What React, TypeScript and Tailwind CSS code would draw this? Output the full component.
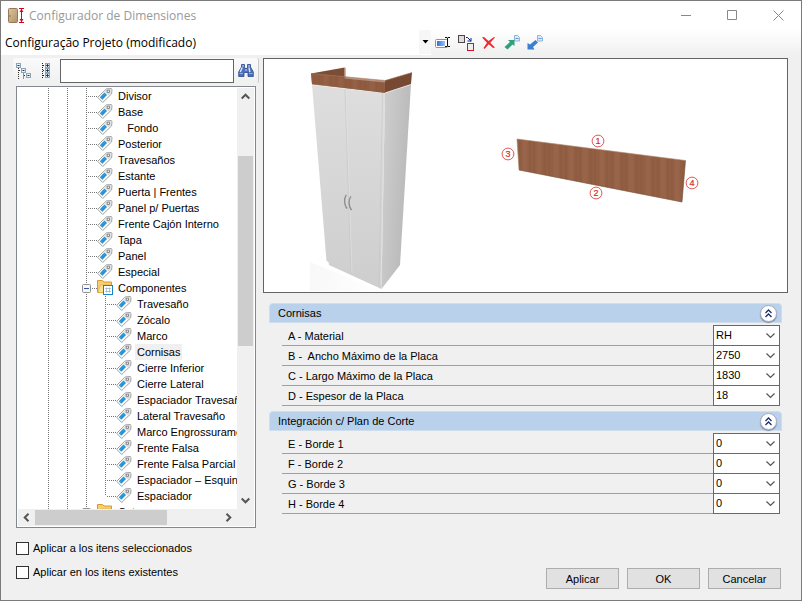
import React, { useState } from "react";

const tagged = [
  "Divisor",
  "Base",
  "\u00a0\u00a0\u00a0Fondo",
  "Posterior",
  "Travesaños",
  "Estante",
  "Puerta | Frentes",
  "Panel p/ Puertas",
  "Frente Cajón Interno",
  "Tapa",
  "Panel",
  "Especial",
];

const components = [
  "Travesaño",
  "Zócalo",
  "Marco",
  "Cornisas",
  "Cierre Inferior",
  "Cierre Lateral",
  "Espaciador Travesaño",
  "Lateral Travesaño",
  "Marco Engrossuramento",
  "Frente Falsa",
  "Frente Falsa Parcial",
  "Espaciador – Esquinero",
  "Espaciador",
];

const groups = [
  {
    title: "Cornisas",
    fields: [
      { id: "a", label: "A - Material", value: "RH" },
      { id: "b", label: "B -\u00a0 Ancho Máximo de la Placa", value: "2750" },
      { id: "c", label: "C - Largo Máximo de la Placa", value: "1830" },
      { id: "d", label: "D - Espesor de la Placa", value: "18" },
    ],
  },
  {
    title: "Integración c/ Plan de Corte",
    fields: [
      { id: "e", label: "E - Borde 1", value: "0" },
      { id: "f", label: "F - Borde 2", value: "0" },
      { id: "g", label: "G - Borde 3", value: "0" },
      { id: "h", label: "H - Borde 4", value: "0" },
    ],
  },
];

function DoorLogo() {
  return (
    <svg width="18" height="18" viewBox="0 0 18 18" aria-hidden="true">
      <defs>
        <linearGradient id="door" x1="0" x2="1" y1="0" y2="1">
          <stop offset="0" stopColor="#dfc39b" />
          <stop offset="1" stopColor="#b39168" />
        </linearGradient>
      </defs>
      <rect x="1.500" y="1.500" width="9" height="14" rx="1" fill="url(#door)" stroke="#94795a" />
      <path d="M3 8v2" stroke="#8a6e4c" />
      <path d="M12 1.500h5M12 15.500h5M14.500 2v13" stroke="#d9001b" />
      <path d="M14.500 2l2 3h-4zM14.500 15l2-3h-4z" fill="#d9001b" />
    </svg>
  );
}

function TagIcon() {
  return (
    <svg className="shrink-0" width="16" height="16" viewBox="0 0 16 16" aria-hidden="true">
      <path d="M.7 9.300L9.300.900l4.900-.4.800.8-.4 4.600L5.700 14.500z" fill="#fbfbfb" stroke="#969696" strokeWidth=".9" />
      <path d="M9.600 1.500l4.400-.4-.4 4.300-2 2-4-4z" fill="#dcdcdc" />
      <path d="M2.800 9.200l4.700-4.600 2.500 2.500-4.700 4.600z" fill="#2090d3" />
      <path d="M4.500 9.700l3.500-3.500" stroke="#74c3ee" strokeWidth=".8" strokeDasharray="1 1" />
      <rect x="10.200" y="2.200" width="2.200" height="2.200" fill="#fff" stroke="#808080" strokeWidth=".9" />
    </svg>
  );
}

function FolderIcon() {
  return (
    <svg className="shrink-0" width="16" height="16" viewBox="0 0 16 16" aria-hidden="true">
      <path d="M.5 12.500v-12h5l1.500 1.500h7.500v10.500z" fill="#f6cf72" stroke="#d99a2b" />
      <path d="M1 12.500l2.500-7.500h11v7.500z" fill="#fbe29b" stroke="#e0a63c" strokeWidth=".6" />
      <rect x="6.500" y="5.500" width="9" height="9" fill="#fff" stroke="#1784c7" />
      <path d="M8 8.500h6M8 11.500h6M9.500 7.500v5M12.500 7.500v5" stroke="#9db8cc" strokeWidth=".8" />
    </svg>
  );
}

function Minus() {
  return (
    <svg width="9" height="9" viewBox="0 0 9 9" aria-hidden="true">
      <rect x=".5" y=".5" width="8" height="8" rx="1" fill="#f7f7f7" stroke="#8f8f8f" />
      <path d="M2 4.500h5" stroke="#3354a8" />
    </svg>
  );
}

function CollapseAllIcon() {
  const box = "fill-[#eaf3fa] stroke-[#8aa5ba]";
  return (
    <svg width="16" height="16" viewBox="0 0 16 16" aria-hidden="true">
      <path d="M2.500 5v11M7.500 9.500v6.500M3 7.500h3M8 12.500h3" stroke="#333" strokeDasharray="1 1" />
      <rect className={box} x=".5" y=".5" width="4" height="4" />
      <rect className={box} x="5.500" y="5.500" width="4" height="4" />
      <rect className={box} x="10.500" y="10.500" width="4" height="4" />
      <path d="M1.500 2.500h2M6.500 7.500h2M11.500 12.500h2" stroke="#234" />
    </svg>
  );
}

function ExpandAllIcon() {
  const box = "fill-[#e4eef6] stroke-[#8aa5ba]";
  return (
    <svg width="10" height="16" viewBox="0 0 10 16" aria-hidden="true">
      <path d="M1.500 0v16M2 2.500h2M2 7.500h2M2 12.500h2" stroke="#222" strokeDasharray="1 1" />
      <rect className={box} x="4.500" y=".5" width="4" height="4" />
      <rect className={box} x="4.500" y="5.500" width="4" height="4" />
      <rect className={box} x="4.500" y="10.500" width="4" height="4" />
      <path d="M5 2.500h3M5 7.500h3M5 12.500h3M6.500 1v3M6.500 6v3M6.500 11v3" stroke="#123" strokeWidth=".8" />
    </svg>
  );
}

function Binoculars() {
  return (
    <svg width="16" height="16" viewBox="0 0 16 16" aria-hidden="true">
      <path
        d="M3.500 1.500h3V4l.5 1.500h2L9.500 4V1.500h3V4l2.800 5v4.500H10V9.500H6v4H.7V9l2.800-5z"
        fill="#4b70b8"
        stroke="#2a4a8f"
        strokeWidth=".8"
      />
      <path d="M4.200 4.500L2.300 9M11 4.500l.8 4.500" stroke="#dbe6fa" fill="none" strokeWidth="1.400" />
      <path d="M4 3h2M10 3h2M7 7h2" stroke="#c6d6f3" />
      <path d="M1.500 10.500h3.500M11 10.500h3.500" stroke="#8facdf" />
    </svg>
  );
}

function RenameIcon() {
  return (
    <svg width="16" height="16" viewBox="0 0 16 16" aria-hidden="true">
      <defs>
        <linearGradient id="fill">
          <stop offset="0" stopColor="#2f6fe0" />
          <stop offset="1" stopColor="#9cc2f7" />
        </linearGradient>
      </defs>
      <rect x=".5" y="4.500" width="12" height="8" rx="1" fill="#fff" stroke="#8a939e" />
      <rect x="2" y="6" width="8" height="5" fill="url(#fill)" />
      <path d="M10 2.500h2l.5.500.5-.500h2M10 11.500h2l.5-.500.5.500h2M12.500 3v8" stroke="#111" fill="none" />
    </svg>
  );
}

function DuplicateIcon() {
  return (
    <svg width="16" height="16" viewBox="0 0 16 16" aria-hidden="true">
      <rect x=".5" y=".5" width="6" height="7" fill="#ddd" stroke="#51434a" />
      <rect x="9.500" y="8.500" width="6" height="7" fill="#eee" stroke="#d9121b" />
      <path d="M8 2.500h1.500l3 3M13 3v3.500M9.500 6h3.500" stroke="#0b1f7a" fill="none" />
    </svg>
  );
}

function DeleteIcon() {
  return (
    <svg width="16" height="16" viewBox="0 0 16 16" aria-hidden="true">
      <path d="M1 2.500l2-.5 4.500 4 5.500-4 1 .5-4.700 5.200L14 12.500 12 13 7.800 9.300 3.500 14l-1-1L6 7.800z" fill="#ee2a2e" />
    </svg>
  );
}

function Sheet() {
  return (
    <g>
      <path d="M10.500.500h3l2 2v3.500h-5z" fill="#dceafb" stroke="#8fb3df" />
      <path d="M11.500 3.500h3" stroke="#6b98d0" />
    </g>
  );
}

function ExportIcon() {
  return (
    <svg width="16" height="16" viewBox="0 0 16 16" aria-hidden="true">
      <Sheet />
      <path d="M4 5h6.500v6L8.500 9.500l-5 5L.5 12 6 7z" fill="#2fa17c" />
    </svg>
  );
}

function ImportIcon() {
  return (
    <svg width="16" height="16" viewBox="0 0 16 16" aria-hidden="true">
      <Sheet />
      <path d="M8.500 5l2.500 2.500-5 4.500 1.500 2.500H.5V8l2.500 1.500z" fill="#3c7ed0" />
    </svg>
  );
}

type ScrollArrowProps = { d: string };

function ScrollArrow({ d }: ScrollArrowProps) {
  return (
    <svg width="9" height="9" viewBox="0 0 9 9" aria-hidden="true">
      <path d={d} fill="none" stroke="#555" strokeWidth="2" />
    </svg>
  );
}

function Guide() {
  return (
    <span className="h-4 w-[19px] shrink-0">
      <span className="block h-4 w-px bg-[repeating-linear-gradient(to_bottom,#777_0_1px,transparent_1px_2px)]" />
    </span>
  );
}

function Elbow({ half = false }: { half?: boolean }) {
  return (
    <span className="flex h-4 w-[11px] shrink-0 items-center">
      <span
        className={
          "w-px shrink-0 bg-[repeating-linear-gradient(to_bottom,#777_0_1px,transparent_1px_2px)] " +
          (half ? "h-2 self-start" : "h-4")
        }
      />
      <span className="h-px flex-1 bg-[repeating-linear-gradient(to_right,transparent_0_1px,#777_1px_2px)]" />
    </span>
  );
}

type NodeProps = {
  label: string;
  depth: number;
  folder?: boolean;
  last?: boolean;
  selected?: boolean;
  onSelect?: () => void;
};

function TreeNode({ label, depth, folder, last, selected, onSelect }: NodeProps) {
  return (
    <li
      role="treeitem"
      aria-selected={!!selected}
      onClick={onSelect}
      className="flex h-4 items-center whitespace-nowrap pl-[30px]"
    >
      {Array.from({ length: depth }, (_, i) => (
        <Guide key={i} />
      ))}
      <span className="relative">
        <Elbow half={last} />
        {folder && (
          <button aria-label="Contraer" className="absolute -left-1 top-1">
            <Minus />
          </button>
        )}
      </span>
      {folder ? <FolderIcon /> : <TagIcon />}
      <span className={"ml-[3px] h-4 px-[2px] leading-4 " + (selected ? "bg-[#f0f0f0]" : "")}>{label}</span>
    </li>
  );
}

function Callout({ x, y, n }: { x: number; y: number; n: number }) {
  return (
    <g>
      <circle cx={x} cy={y} r="5.900" fill="#fff" stroke="#df4545" strokeWidth=".9" />
      <text x={x} y={y + 3} textAnchor="middle" fontSize="9" fill="#d42a2a" stroke="#d42a2a" strokeWidth=".2">
        {n}
      </text>
    </g>
  );
}

function Preview() {
  return (
    <svg className="block h-[233px] w-[523px] max-w-full" viewBox="264 59 523 233" role="img" aria-label="Cornisas">
      <defs>
        <linearGradient id="front" x1="0" x2="0" y1="0" y2="1">
          <stop offset="0" stopColor="#dedede" />
          <stop offset="1" stopColor="#cecece" />
        </linearGradient>
        <linearGradient id="side" x1="0" x2="1" y1="0" y2=".4">
          <stop offset="0" stopColor="#d0d0d0" />
          <stop offset="1" stopColor="#b8b8b8" />
        </linearGradient>
        <linearGradient id="floor" x1="0" x2="1">
          <stop offset="0" stopColor="#f8f8f8" />
          <stop offset="1" stopColor="#fff" />
        </linearGradient>
        <pattern id="wood" width="46" height="60" patternUnits="userSpaceOnUse">
          <rect width="46" height="60" fill="#925f44" />
          <path d="M4 0v60M19 0v60M33 0v60" stroke="#98654a" strokeWidth="5" />
          <path d="M9 0v60M14 0v60M24 0v60M28 0v60M39 0v60M43 0v60" stroke="#8a583e" strokeWidth="1" />
        </pattern>
      </defs>
      <path d="M310 262l72 29h-72z" fill="url(#floor)" />
      <path d="M311 73.500l33.500-6v12l-20 2z" fill="#7b4d35" />
      <path d="M344.500 67.500l1 .5v10l-1 .5z" fill="#a37355" />
      <path d="M312 84.500l73 8-3.500 196.500-52.500-24-.5-3-2-1z" fill="url(#front)" />
      <path d="M385 92.500l26-8.500-11 181-18.500 24z" fill="url(#side)" />
      <path d="M384.500 93L381 285" stroke="#e0e0e0" strokeWidth="1" />
      <path d="M382.500 93L379 286" stroke="#c6c6c6" strokeWidth=".6" />
      <path d="M345 88.500l6 184" stroke="#c4c4c4" strokeWidth=".6" />
      <path d="M346 88.500l6 184" stroke="#e4e4e4" strokeWidth=".6" />
      <path d="M312 84.500l73 8 26-8.500" stroke="#efefef" strokeWidth="1.500" fill="none" />
      <path d="M311 73.500l33 5 41 4v10.500l-73-9z" fill="#8a563b" />
      <path d="M311 73.500l74 7v12l-73-8z" fill="url(#wood)" opacity=".7" />
      <path d="M385 80.500l27-8-1 11.500-26 8.500z" fill="#774832" />
      <path d="M311 73.500l74 7 27-8" fill="none" stroke="#a77a5e" strokeWidth=".6" />
      <path d="M346.500 195c-2.500 4-2 9 .5 13.500M351 196.500c-2.500 4-2 9 .5 13.500" fill="none" stroke="#8c8c8c" strokeWidth="1.800" />
      <path d="M347 195.500c-2 4-1.500 8 .5 12M351.500 197c-2 4-1.500 8 .5 12" fill="none" stroke="#eee" strokeWidth=".6" />
      <path d="M517 139l168.500 21.500-3.500 41.500-163-32z" fill="url(#wood)" />
      <path d="M517 139l2 31M517 139l168.500 21.500" stroke="#ad8469" strokeWidth=".6" fill="none" />
      <path d="M685.500 160.500L682 202l-163-32" stroke="#704630" strokeWidth=".6" fill="none" />
      <Callout x={598} y={141} n={1} />
      <Callout x={596} y={193} n={2} />
      <Callout x={508} y={154} n={3} />
      <Callout x={692} y={183} n={4} />
    </svg>
  );
}

function Group({ title, fields }: (typeof groups)[number]) {
  const [open, setOpen] = useState(true);
  return (
    <section>
      <header className="flex h-5 items-center justify-between rounded-t-[4px] border border-[#cfdded] bg-[#b9d1ea] pl-2 pr-1">
        <h2 className="leading-4">{title}</h2>
        <button
          aria-label="Contraer grupo"
          aria-expanded={open}
          onClick={() => setOpen(!open)}
          className="flex size-[17px] items-center justify-center rounded-full border border-[#a9adbf] bg-white shadow-[0_1px_1px_#7d8ba5]"
        >
          <svg width="9" height="9" viewBox="0 0 9 9" aria-hidden="true">
            <path d="M1.500 4L4.500 1l3 3M1.500 8l3-3 3 3" fill="none" stroke="#1b2d6b" strokeWidth="1.300" />
          </svg>
        </button>
      </header>
      {open && (
        <div className="ml-[13px] mr-[2px] mt-[2px]">
          {fields.map((f, i) => (
            <div key={f.id} className={"flex border-b border-[#a0a0a0] " + (i === 0 ? "h-[21px]" : "h-5")}>
              <label htmlFor={f.id} className="flex-1 self-end pl-[6px] leading-[18px]">
                {f.label}
              </label>
              <span
                className={
                  "relative -mb-px w-[67px] border-x border-b border-[#696969] bg-white " + (i === 0 ? "border-t" : "")
                }
              >
                <select
                  id={f.id}
                  defaultValue={f.value}
                  className="block h-[18px] w-full appearance-none bg-transparent pl-[2px] leading-[18px] outline-none"
                >
                  <option>{f.value}</option>
                </select>
                <svg className="pointer-events-none absolute right-1 top-[7px]" width="9" height="6" viewBox="0 0 9 6" aria-hidden="true">
                  <path d="M.5.500l4 4 4-4" fill="none" stroke="#555" strokeWidth="1.200" />
                </svg>
              </span>
            </div>
          ))}
        </div>
      )}
    </section>
  );
}

export default function App() {
  const [selected, setSelected] = useState("Cornisas");
  return (
    <div className="flex h-screen flex-col border border-[#7a7a7a] bg-[#f0f0f0] font-['Liberation_Sans',Arial,sans-serif] text-[11px] text-black">
      <header className="flex h-[29px] shrink-0 items-center bg-white pl-[6px] font-['Open_Sans',sans-serif] text-[12px] text-[#999]">
        <DoorLogo />
        <h1 className="ml-1 flex-1">Configurador de Dimensiones</h1>
        <button aria-label="Minimizar" className="flex h-full w-[46px] items-center justify-center">
          <svg width="11" height="11" viewBox="0 0 11 11"><path d="M0 5.500h10" stroke="#888" /></svg>
        </button>
        <button aria-label="Maximizar" className="flex h-full w-[46px] items-center justify-center">
          <svg width="11" height="11" viewBox="0 0 11 11"><path d="M.5.500h9v9h-9z" fill="none" stroke="#888" /></svg>
        </button>
        <button aria-label="Cerrar" className="flex h-full w-[46px] items-center justify-center">
          <svg width="11" height="11" viewBox="0 0 11 11"><path d="M.5.500l10 10M10.500.500l-10 10" stroke="#888" /></svg>
        </button>
      </header>

      <div className="flex h-[25px] shrink-0 items-center bg-linear-to-b from-white to-[#f0f0f0]">
        <div className="relative h-full w-[430px] bg-white">
          <select
            aria-label="Configuración"
            className="h-[25px] w-full appearance-none bg-transparent pl-1 font-['Open_Sans',sans-serif] text-[12px] outline-none"
          >
            <option>Configuração Projeto (modificado)</option>
          </select>
          <span className="pointer-events-none absolute right-0 top-0 flex h-6 w-3 items-center justify-center bg-[#f7f7f7]">
            <svg width="7" height="4" viewBox="0 0 7 4"><path d="M.5 0h6L3.500 3.500z" /></svg>
          </span>
        </div>
        <div className="flex gap-[7px] pl-1">
          <button aria-label="Renombrar"><RenameIcon /></button>
          <button aria-label="Duplicar"><DuplicateIcon /></button>
          <button aria-label="Eliminar"><DeleteIcon /></button>
          <button aria-label="Exportar"><ExportIcon /></button>
          <button aria-label="Importar"><ImportIcon /></button>
        </div>
      </div>

      <div className="flex min-h-0 flex-1 pr-[13px] pt-[3px]">
        <aside className="flex w-[262px] shrink-0 flex-col pl-3">
          <div className="mr-1 flex h-[25px] shrink-0 items-center rounded-[2px] border-r border-[#c8c8c8] bg-linear-to-b from-[#fafafa] to-[#f0f0f0] pl-[3px]">
            <button aria-label="Contraer todo"><CollapseAllIcon /></button>
            <button aria-label="Expandir todo" className="mx-[9px]"><ExpandAllIcon /></button>
            <input aria-label="Buscar" className="h-6 w-[174px] border border-[#646464] bg-white px-1 outline-none" />
            <button aria-label="Localizar" className="ml-1"><Binoculars /></button>
          </div>

          <div className="ml-[3px] mr-[7px] mt-[3px] flex min-h-0 flex-1 flex-col border border-[#828790] bg-white p-px">
            <div className="flex min-h-0 flex-1">
              <ul role="tree" aria-label="Elementos" className="min-w-0 flex-1 overflow-hidden">
                {tagged.map((t) => (
                  <TreeNode key={t} label={t} depth={2} selected={selected === t} onSelect={() => setSelected(t)} />
                ))}
                <TreeNode label="Componentes" depth={2} folder />
                {components.map((t, i) => (
                  <TreeNode
                    key={t}
                    label={t}
                    depth={3}
                    last={i === components.length - 1}
                    selected={selected === t}
                    onSelect={() => setSelected(t)}
                  />
                ))}
                <TreeNode label="Cotas" depth={2} folder />
              </ul>
              <div className="flex w-[17px] shrink-0 flex-col items-center bg-[#f0f0f0]">
                <button aria-label="Subir" className="flex h-[17px] items-center">
                  <ScrollArrow d="M.7 6.500L4.500 2.700l3.800 3.800" />
                </button>
                <div className="flex w-full flex-1 flex-col">
                  <div className="h-[51px]" />
                  <div className="ml-px h-[190px] w-[15px] bg-[#cdcdcd]" />
                </div>
                <button aria-label="Bajar" className="flex h-[17px] items-center">
                  <ScrollArrow d="M.7 2.500l3.800 3.800 3.800-3.800" />
                </button>
              </div>
            </div>
            <div className="flex h-[17px] shrink-0 items-center bg-[#f0f0f0] pr-[17px]">
              <button aria-label="Izquierda" className="flex w-[17px] justify-center">
                <ScrollArrow d="M6.500.700L2.700 4.500l3.800 3.800" />
              </button>
              <div className="flex flex-1">
                <div className="h-[15px] w-[132px] bg-[#cdcdcd]" />
              </div>
              <button aria-label="Derecha" className="flex w-[17px] justify-center">
                <ScrollArrow d="M2.500.700l3.800 3.800-3.800 3.800" />
              </button>
            </div>
          </div>

          <div className="flex h-[72px] shrink-0 flex-col gap-2 pl-[3px] pt-3">
            <label className="flex h-4 items-center gap-1">
              <input type="checkbox" className="size-[13px] appearance-none border border-[#333] bg-white checked:bg-[#333]" />
              Aplicar a los itens seleccionados
            </label>
            <label className="flex h-4 items-center gap-1">
              <input type="checkbox" className="size-[13px] appearance-none border border-[#333] bg-white checked:bg-[#333]" />
              Aplicar en los itens existentes
            </label>
          </div>
        </aside>

        <main className="flex min-w-0 flex-1 flex-col">
          <div className="shrink-0 border border-[#646464] bg-white">
            <Preview />
          </div>
          <div className="mx-[6px] mt-[10px] flex flex-col gap-[5px]">
            {groups.map((g) => (
              <Group key={g.title} {...g} />
            ))}
          </div>
          <div className="mb-[11px] mr-[7px] mt-auto flex justify-end gap-2">
            {["Aplicar", "OK", "Cancelar"].map((b) => (
              <button key={b} className="h-[21px] w-[73px] border border-[#adadad] bg-[#e1e1e1] leading-4">
                {b}
              </button>
            ))}
          </div>
        </main>
      </div>
    </div>
  );
}
